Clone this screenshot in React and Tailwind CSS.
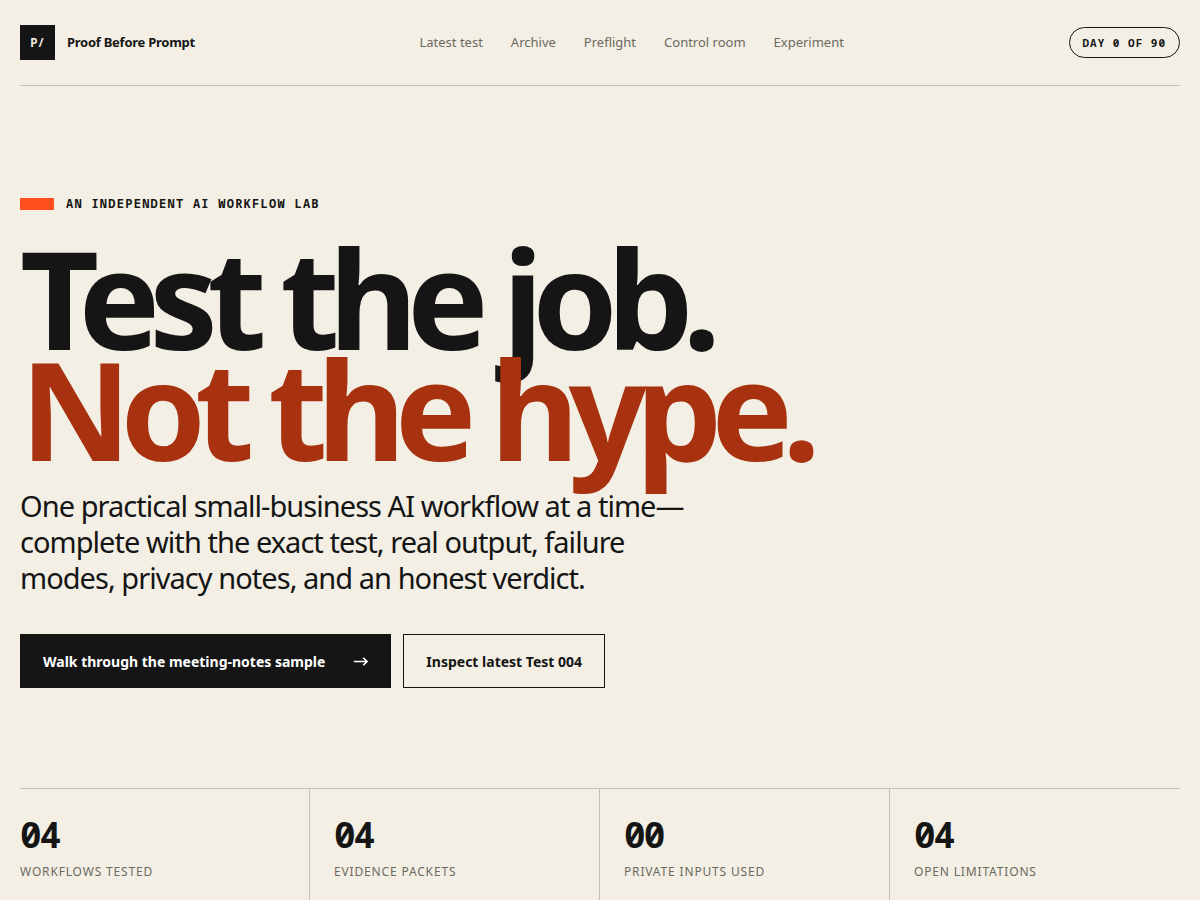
import React from "react";

const navLinks = ["Latest test", "Archive", "Preflight", "Control room", "Experiment"];

const stats = [
  { value: "04", label: "Workflows tested" },
  { value: "04", label: "Evidence packets" },
  { value: "00", label: "Private inputs used" },
  { value: "04", label: "Open limitations" },
];

export default function App() {
  return (
    <div className="min-h-screen bg-[#f3efe4] px-5 text-[#151515] font-['Noto_Sans',sans-serif]">
      {/* Header */}
      <header className="flex items-center justify-between border-b border-[#c4c0b4] py-[25px]">
        <a href="#top" className="flex items-center gap-3">
          <span className="flex size-[35px] items-center justify-center bg-[#151515] text-xs font-bold text-[#f3efe4] font-['Noto_Sans_Mono','Liberation_Mono',monospace]">
            P/
          </span>
          <span className="text-[13px] font-bold tracking-[-0.02em]">Proof Before Prompt</span>
        </a>

        <nav className="flex gap-7 text-[13px] text-[#6c695f]">
          {navLinks.map((link) => (
            <a key={link} href="#" className="hover:text-[#151515]">
              {link}
            </a>
          ))}
        </nav>

        <span className="rounded-full border border-[#151515] px-[13px] py-[7px] text-[11px] leading-[15px] font-bold tracking-[0.09em] font-['Noto_Sans_Mono','Liberation_Mono',monospace]">
          DAY 0 OF 90
        </span>
      </header>

      <main id="top">
        {/* Hero */}
        <section className="pt-[109px] pb-[100px]">
          <p className="flex items-center gap-3 text-xs leading-[18px] font-bold tracking-[0.105em] uppercase font-['Noto_Sans_Mono','Liberation_Mono',monospace]">
            <span className="h-3 w-[34px] bg-[#ff4f1f]" />
            An independent AI workflow lab
          </p>

          <h1 className="mt-[29px] text-[137px] leading-[111px] font-bold tracking-[-0.08em]">
            <span className="block">Test the job.</span>
            <span className="block text-[#a83210]">Not the hype.</span>
          </h1>

          <p className="mt-6 max-w-[680px] text-[29px] leading-9 tracking-[-0.033em]">
            One practical small-business AI workflow at a time—complete with the exact test, real
            output, failure modes, privacy notes, and an honest verdict.
          </p>

          <div className="mt-[38px] flex flex-wrap gap-3 text-sm leading-[21px] font-bold">
            <a
              href="#sample"
              className="flex h-[54px] items-center gap-7 border border-[#151515] bg-[#151515] px-[22px] text-white"
            >
              Walk through the meeting-notes sample
              <svg
                aria-hidden="true"
                viewBox="0 0 15 12"
                className="h-3 w-[15px]"
                fill="none"
                stroke="currentColor"
                strokeWidth="1.6"
              >
                <path d="M0.8 6.5H13.5M10.2 2.8L14 6.5L10.2 10.2" />
              </svg>
            </a>
            <a href="#latest" className="flex h-[54px] items-center border border-[#151515] px-[22px]">
              Inspect latest Test 004
            </a>
          </div>
        </section>

        {/* Stats */}
        <section className="grid grid-cols-4 border-t border-[#c4c0b4]">
          {stats.map((stat) => (
            <div
              key={stat.label}
              className="border-r border-[#c4c0b4] px-6 pt-[26px] pb-5 first:pl-0 last:border-r-0"
            >
              <p className="text-4xl leading-[40px] font-bold tracking-[-0.05em] font-['Noto_Sans_Mono','Liberation_Mono',monospace]">
                {stat.value}
              </p>
              <p className="mt-2 text-xs leading-[18px] tracking-[0.07em] text-[#6c695f] uppercase">
                {stat.label}
              </p>
            </div>
          ))}
        </section>
      </main>
    </div>
  );
}
